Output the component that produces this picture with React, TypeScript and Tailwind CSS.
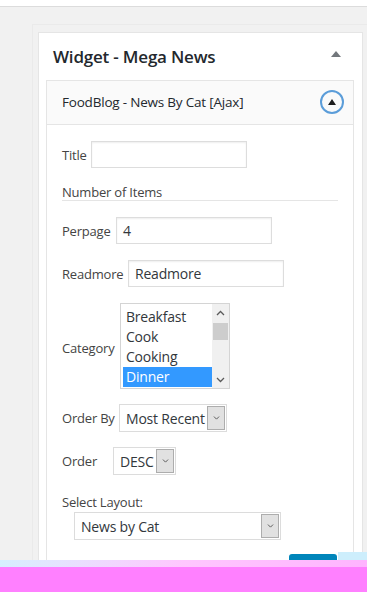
import React from 'react';

const Chevron: React.FC<{ up?: boolean; className?: string }> = ({ up, className }) => (
  <svg width="9" height="6" viewBox="0 0 9 6" className={className}>
    <polyline
      points={up ? '1,5 4.5,1.5 8,5' : '1,1 4.5,4.5 8,1'}
      fill="none"
      stroke="#5a5a5a"
      strokeWidth="1.3"
    />
  </svg>
);

const TextInput: React.FC<{ value?: string; width: string }> = ({ value, width }) => (
  <div className={`${width} h-[27px] border border-[#dddddd] bg-white shadow-[inset_0_1px_2px_rgba(0,0,0,0.07)] flex items-center pl-[6px] text-[14px] text-[#32373c]`}>
    {value}
  </div>
);

const SelectBox: React.FC<{ value: string; width: string }> = ({ value, width }) => (
  <div className={`${width} h-[28px] border border-[#dcdcdc] bg-white flex items-stretch`}>
    <div className="flex-1 flex items-center pl-[6px] text-[14px] text-[#32373c] tracking-[-0.2px]">{value}</div>
    <div className="w-[18px] m-[1px] bg-[#e1e1e1] border border-[#adadad] flex items-center justify-center">
      <Chevron className="scale-75" />
    </div>
  </div>
);

export default function App() {
  const categories = ['Breakfast', 'Cook', 'Cooking', 'Dinner'];

  return (
    <div className="relative w-[367px] h-[592px] overflow-hidden font-['Open_Sans','Noto_Sans',sans-serif] text-[#444]">
      {/* top bar */}
      <div className="h-[7px] bg-white border-b border-[#dcdcdc]" />

      {/* admin area */}
      <div className="h-[553px] bg-[#f1f1f1] overflow-hidden pl-[32px] pt-[17px]">
        <div className="border-l border-t border-[#eaeaea] pl-[5px] pt-[7px]">
          <div className="w-[325px] bg-white border border-[#e5e5e5] pb-[40px]">
            {/* widget title */}
            <div className="flex items-center justify-between pl-[14px] pr-[21px] pt-[12px] h-[36px]">
              <h2 className="text-[17px] leading-[24px] font-semibold text-[#23282d] tracking-[-0.2px]">
                Widget - Mega News
              </h2>
              <svg width="10" height="6" viewBox="0 0 10 6" className="mb-[6px]">
                <polygon points="0,6 5,0 10,6" fill="#72777c" />
              </svg>
            </div>

            {/* inner panel */}
            <div className="ml-[7px] mt-[11px] w-[308px] border border-[#e5e5e5]">
              <div className="h-[44px] bg-[#fafafa] border-b border-[#e5e5e5] flex items-center justify-between pl-[15px] pr-[9px]">
                <span className="text-[13.5px] text-[#23282d] tracking-[-0.2px]">FoodBlog - News By Cat [Ajax]</span>
                <div className="w-[24px] h-[24px] rounded-full border-2 border-[#5b9dd9] flex items-center justify-center mb-[1px]">
                  <svg width="8" height="6" viewBox="0 0 8 6" className="mb-[1px]">
                    <polygon points="0,6 4,0 8,6" fill="#1d1d1d" />
                  </svg>
                </div>
              </div>

              <div className="pl-[15px] pr-[15px] text-[13px] tracking-[-0.2px]">
                {/* Title */}
                <div className="mt-[16px] flex items-center">
                  <span className="w-[29px] mt-[2px]">Title</span>
                  <TextInput width="w-[156px]" />
                </div>

                {/* Number of items */}
                <div className="mt-[16px] leading-[16px] border-b border-[#e5e5e5] w-[276px]">Number of Items</div>

                <div className="mt-[16px] flex items-center">
                  <span className="w-[54px] mt-[2px]">Perpage</span>
                  <TextInput width="w-[156px]" value="4" />
                </div>

                <div className="mt-[16px] flex items-center">
                  <span className="w-[66px] mt-[2px]">Readmore</span>
                  <TextInput width="w-[156px]" value="Readmore" />
                </div>

                {/* Category listbox */}
                <div className="mt-[16px] flex items-center">
                  <span className="w-[58px] mt-[5px]">Category</span>
                  <div className="w-[110px] h-[86px] border border-[#d4d4d4] bg-white flex">
                    <div className="flex-1 pt-[3px] pl-[2px] text-[14px] text-[#32373c]">
                      {categories.map((c) => (
                        <div
                          key={c}
                          className={`h-[20px] leading-[20px] pl-[3px] ${c === 'Dinner' ? 'bg-[#3399ff] text-white' : ''}`}
                        >
                          {c}
                        </div>
                      ))}
                    </div>
                    <div className="w-[17px] bg-[#f0f0f0] flex flex-col items-center">
                      <Chevron up className="mt-[6px]" />
                      <div className="mt-[7px] w-[15px] h-[17px] bg-[#cdcdcd]" />
                      <div className="flex-1" />
                      <Chevron className="mb-[5px]" />
                    </div>
                  </div>
                </div>

                <div className="mt-[15px] flex items-center">
                  <span className="w-[57px] mt-[2px]">Order By</span>
                  <SelectBox value="Most Recent" width="w-[108px]" />
                </div>

                <div className="mt-[15px] flex items-center">
                  <span className="w-[51px] mt-[2px]">Order</span>
                  <SelectBox value="DESC" width="w-[63px]" />
                </div>

                <div className="mt-[19px] leading-[16px]">Select Layout:</div>
                <div className="mt-[2px] ml-[12px]">
                  <SelectBox value="News by Cat" width="w-[207px]" />
                </div>

                <div className="mt-[14px] flex items-start justify-between">
                  <span className="ml-[12px] mt-[2px] text-[13px]">Load more by Ajax</span>
                  <div className="w-[48px] h-[28px] bg-[#0085ba] rounded-t-[3px] mr-[1px]" />
                </div>
              </div>
            </div>
          </div>
        </div>
      </div>

      {/* capture artifact */}
      <div className="absolute left-[338px] top-[552px] w-[29px] h-[8px] bg-[#cdeefc]" />

      {/* pink overlay strip */}
      <div className="h-[7px] bg-gradient-to-r from-[#d6efff] via-[#ffc6ff] to-[#ffb4ff]" />
      <div className="h-[25px] bg-[#ff80ff]" />
    </div>
  );
}
